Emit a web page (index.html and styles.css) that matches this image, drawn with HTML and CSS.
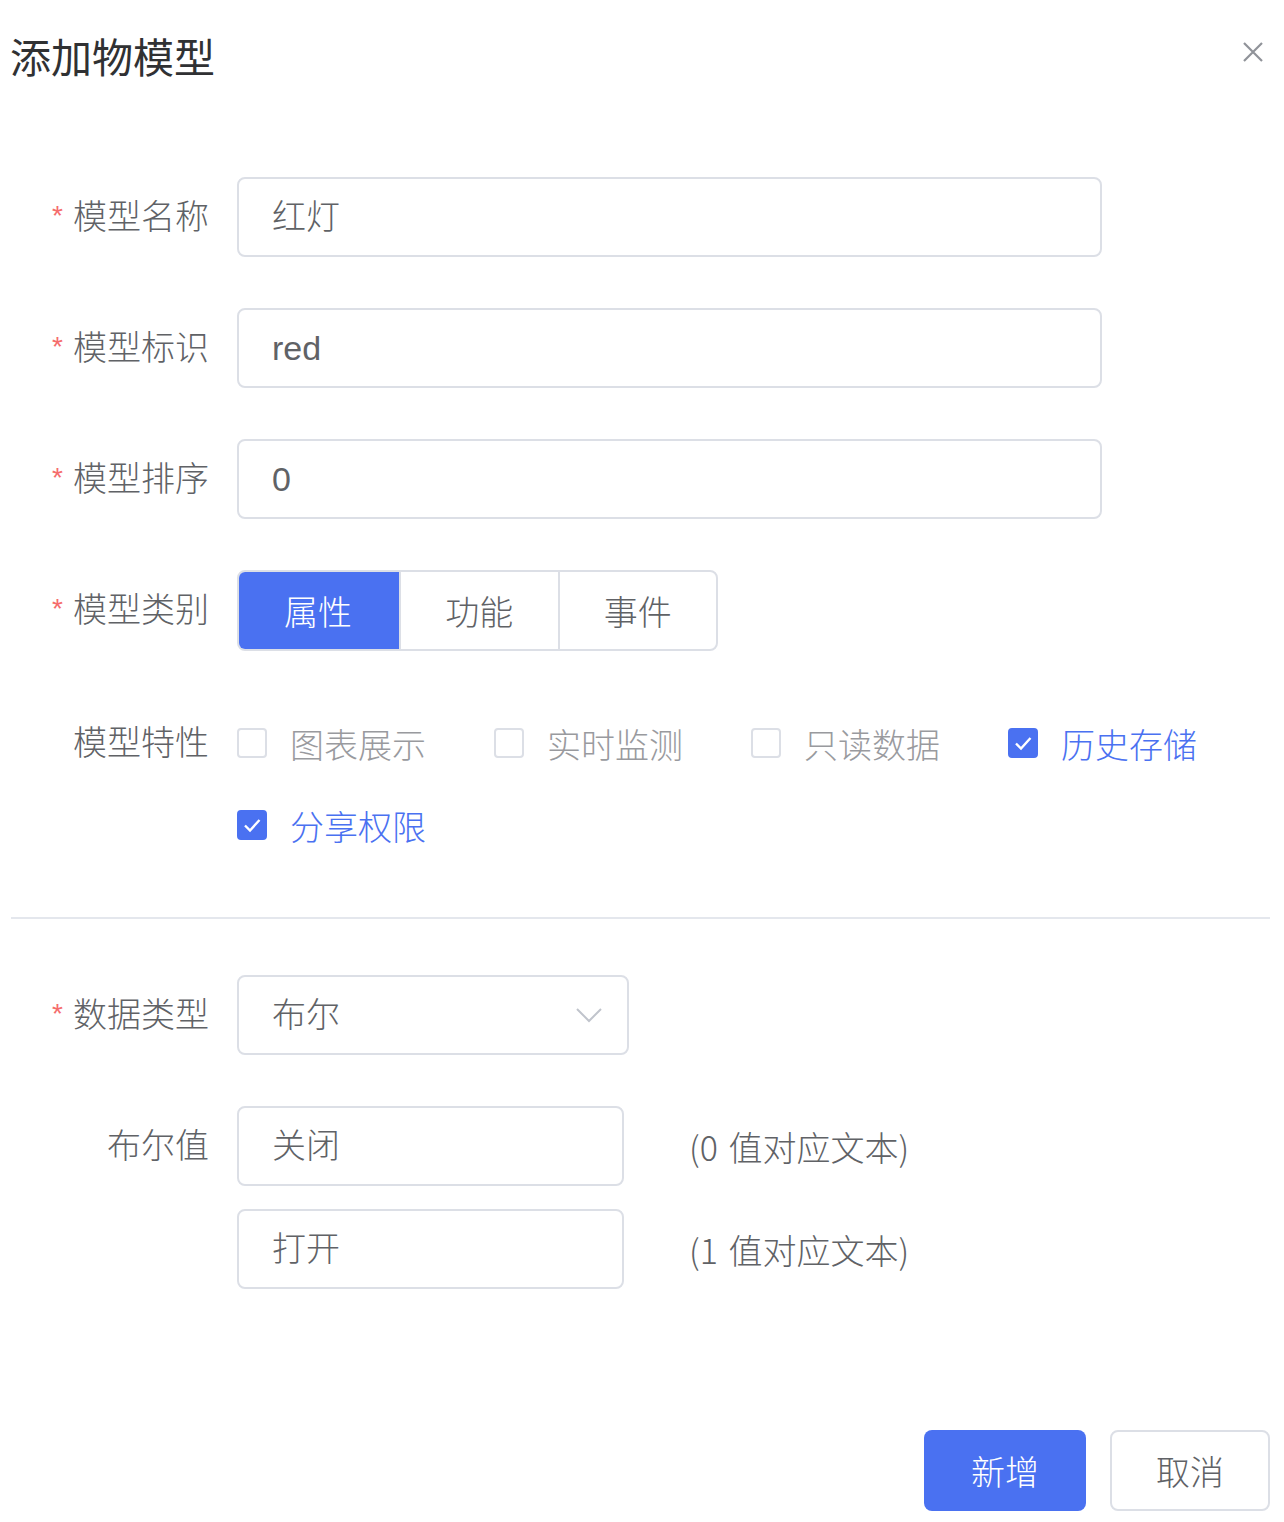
FILE: index.html
```html
<!DOCTYPE html>
<html lang="zh">
<head>
<meta charset="utf-8">
<title>添加物模型</title>
<link rel="stylesheet" href="styles.css">
</head>
<body>
<div class="dialog">
  <div class="header">
    <span class="title">添加物模型</span>
    <span class="close">
      <svg width="20" height="20" viewBox="0 0 20 20"><path d="M1 1 L19 19 M19 1 L1 19" stroke="#909399" stroke-width="2.2" fill="none"/></svg>
    </span>
  </div>

  <div class="form">
    <div class="row">
      <div class="label required">模型名称</div>
      <div class="content"><div class="input wide">红灯</div></div>
    </div>
    <div class="row">
      <div class="label required">模型标识</div>
      <div class="content"><div class="input wide">red</div></div>
    </div>
    <div class="row">
      <div class="label required">模型排序</div>
      <div class="content"><div class="input wide">0</div></div>
    </div>
    <div class="row">
      <div class="label required">模型类别</div>
      <div class="content">
        <div class="radio-group">
          <span class="radio active">属性</span>
          <span class="radio">功能</span>
          <span class="radio">事件</span>
        </div>
      </div>
    </div>
    <div class="row">
      <div class="label check-label">模型特性</div>
      <div class="content">
        <div class="checks">
          <span class="check"><span class="box"></span><span class="check-text">图表展示</span></span>
          <span class="check"><span class="box"></span><span class="check-text">实时监测</span></span>
          <span class="check"><span class="box"></span><span class="check-text">只读数据</span></span>
          <span class="check checked"><span class="box"><svg width="30" height="30" viewBox="0 0 30 30"><path d="M8 15.5 L13 20.5 L22.5 10" stroke="#fff" stroke-width="2.4" fill="none"/></svg></span><span class="check-text">历史存储</span></span>
          <span class="check checked"><span class="box"><svg width="30" height="30" viewBox="0 0 30 30"><path d="M8 15.5 L13 20.5 L22.5 10" stroke="#fff" stroke-width="2.4" fill="none"/></svg></span><span class="check-text">分享权限</span></span>
        </div>
      </div>
    </div>

    <div class="divider"></div>

    <div class="row">
      <div class="label required">数据类型</div>
      <div class="content">
        <div class="input select"><span>布尔</span>
          <svg width="26" height="16" viewBox="0 0 26 16"><path d="M1 2 L13 14 L25 2" stroke="#C0C4CC" stroke-width="2" fill="none"/></svg>
        </div>
      </div>
    </div>
    <div class="row bool-row">
      <div class="label">布尔值</div>
      <div class="content bool">
        <div class="bool-line"><div class="input short">关闭</div><span class="hint">(0 值对应文本)</span></div>
        <div class="bool-line"><div class="input short">打开</div><span class="hint">(1 值对应文本)</span></div>
      </div>
    </div>
  </div>

  <div class="footer">
    <span class="btn primary">新增</span>
    <span class="btn plain">取消</span>
  </div>
</div>
</body>
</html>
```

FILE: styles.css
```css
* { box-sizing: border-box; }
body {
  margin: 0;
  background: #fff;
  font-family: "Liberation Sans", "Noto Sans CJK SC", sans-serif;
  font-weight: 300;
}
.dialog {
  width: 1284px;
  padding: 30px 14px 10px 10px;
}
.header {
  display: flex;
  justify-content: space-between;
  align-items: flex-start;
  height: 58px;
}
.title {
  font-size: 41px;
  line-height: 58px;
  color: #303133;
  font-weight: 400;
}
.close {
  width: 20px;
  height: 20px;
  margin: 12px 7px 0 0;
  display: flex;
}
.form {
  margin-top: 89px;
}
.row {
  display: flex;
  margin-bottom: 51px;
}
.label {
  width: 227px;
  height: 80px;
  flex-shrink: 0;
  padding-right: 28px;
  text-align: right;
  font-size: 34px;
  line-height: 80px;
  color: #606266;
  white-space: nowrap;
}
.required::before {
  content: "*";
  color: #F56C6C;
  font-size: 28px;
  font-weight: 400;
  line-height: 0;
  margin-right: 10px;
  vertical-align: 4px;
}
.check-label { line-height: 82px; height: 82px; }
.content { flex: 1; min-width: 0; }
.input {
  height: 80px;
  border: 2px solid #DCDFE6;
  border-radius: 8px;
  padding: 0 33px;
  font-size: 34px;
  line-height: 76px;
  color: #606266;
}
.wide { width: 865px; }
.short { width: 387px; }
.select {
  width: 392px;
  display: flex;
  justify-content: space-between;
  align-items: center;
  padding-right: 25px;
}
.radio-group {
  display: flex;
  width: 481px;
  height: 81px;
  border: 2px solid #DCDFE6;
  border-radius: 8px;
  overflow: hidden;
}
.radio {
  flex: 1;
  display: flex;
  align-items: center;
  justify-content: center;
  font-size: 34px;
  color: #606266;
  border-left: 2px solid #DCDFE6;
}
.radio:first-child { border-left: none; }
.radio.active {
  background: #4A71F1;
  color: #fff;
  margin: -2px 0 -2px -2px;
  flex: 0 0 162px;
}
.checks {
  display: flex;
  flex-wrap: wrap;
  column-gap: 68px;
}
.check {
  display: flex;
  align-items: center;
  height: 82px;
}
.box {
  width: 30px;
  height: 30px;
  border: 2px solid #DCDFE6;
  border-radius: 4px;
  margin-right: 23px;
  display: flex;
  align-items: center;
  justify-content: center;
  overflow: hidden;
}
.box svg { flex-shrink: 0; }
.check-text {
  font-size: 34px;
  color: #999A9E;
  white-space: nowrap;
}
.checked .box {
  background: #4A71F1;
  border-color: #4A71F1;
}
.checked .check-text { color: #4A71F1; }
.divider {
  height: 2px;
  background: #E4E7ED;
  margin: 1px 0 56px 1px;
}
.bool {
  display: flex;
  flex-direction: column;
  gap: 23px;
}
.bool-line {
  display: flex;
  align-items: center;
}
.hint {
  margin-left: 65px;
  font-size: 34px;
  color: #606266;
  font-family: "Noto Sans CJK SC", sans-serif;
  word-spacing: 3px;
}
.bool-row { margin-bottom: 0; }
.footer {
  display: flex;
  justify-content: flex-end;
  gap: 24px;
  margin-top: 141px;
}
.btn {
  height: 81px;
  display: flex;
  align-items: center;
  justify-content: center;
  font-size: 34px;
  border-radius: 8px;
}
.primary {
  width: 162px;
  background: #4A71F1;
  color: #fff;
}
.plain {
  width: 160px;
  border: 2px solid #DCDFE6;
  color: #606266;
}
```
